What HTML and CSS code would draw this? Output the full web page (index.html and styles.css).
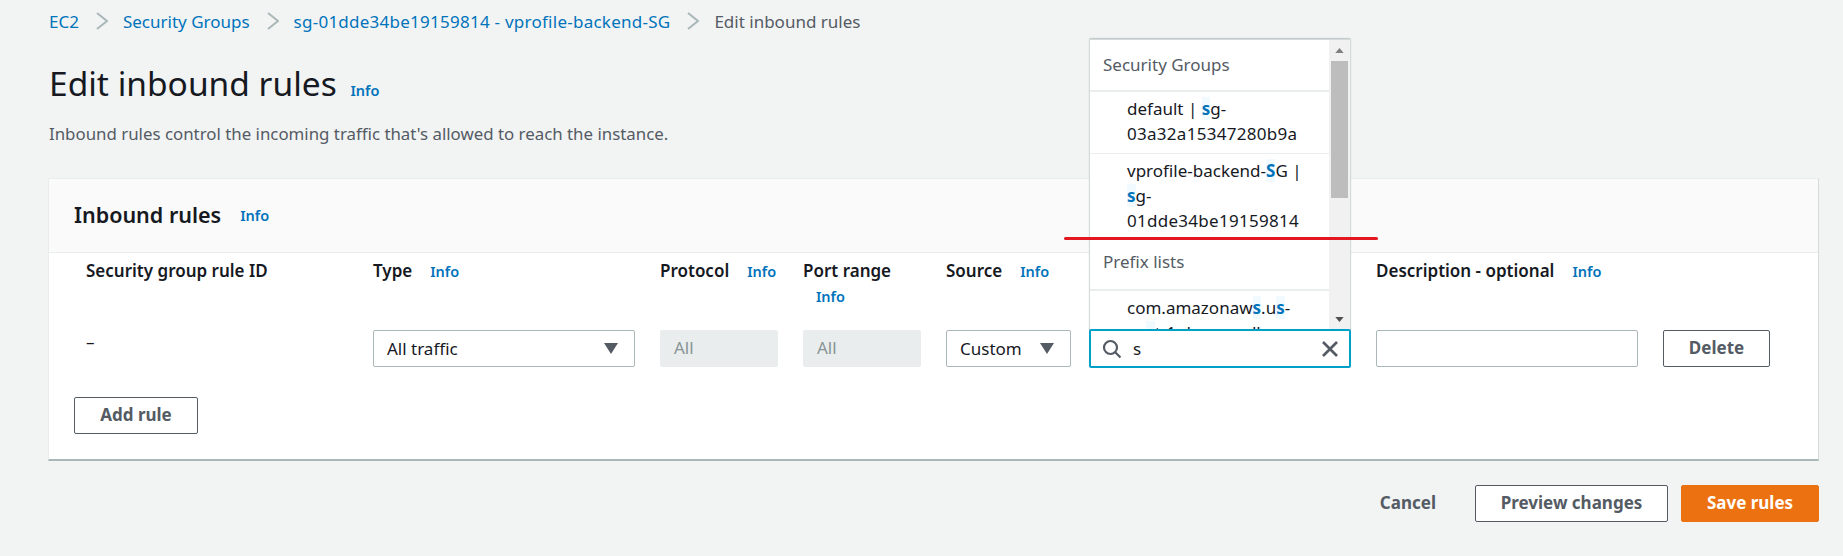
FILE: index.html
```html
<!DOCTYPE html>
<html lang="en">
<head>
  <meta charset="UTF-8" />
  <title>Edit inbound rules</title>
  <link rel="stylesheet" href="styles.css">
</head>
<body>
  <nav class="crumbs">
    <a href="#">EC2</a>
    <svg class="chev" viewBox="0 0 12 18"><polyline points="1,1 11,9 1,17" /></svg>
    <a href="#">Security Groups</a>
    <svg class="chev" viewBox="0 0 12 18"><polyline points="1,1 11,9 1,17" /></svg>
    <a class="sg-link" href="#">sg-01dde34be19159814 - vprofile-backend-SG</a>
    <svg class="chev" viewBox="0 0 12 18"><polyline points="1,1 11,9 1,17" /></svg>
    <span class="here">Edit inbound rules</span>
  </nav>

  <h1>Edit inbound rules <a class="info" href="#">Info</a></h1>
  <p class="lead">Inbound rules control the incoming traffic that's allowed to reach the instance.</p>

  <section class="card">
    <header class="card-head">
      <h2>Inbound rules</h2>
      <a class="info" href="#">Info</a>
    </header>

    <div class="rules">
      <div class="th first">Security group rule ID</div>
      <div class="th"><b>Type</b><a class="info" href="#">Info</a></div>
      <div class="th"><b>Protocol</b><a class="info" href="#">Info</a></div>
      <div class="th"><b>Port range</b><a class="info wrapped" href="#">Info</a></div>
      <div class="th"><b>Source</b><a class="info" href="#">Info</a></div>
      <div class="th"></div>
      <div class="th"><b>Description - optional</b><a class="info" href="#">Info</a></div>
      <div class="th"></div>

      <div class="dash">–</div>
      <div class="pad">
        <div class="field select">All traffic
          <svg class="caret" viewBox="0 0 14 11"><polygon points="0,0 14,0 7,11" /></svg>
        </div>
      </div>
      <div class="pad"><div class="field off">All</div></div>
      <div class="pad"><div class="field off">All</div></div>
      <div>
        <div class="field select">Custom
          <svg class="caret" viewBox="0 0 14 11"><polygon points="0,0 14,0 7,11" /></svg>
        </div>
      </div>

      <div class="pad search-cell">
        <div class="menu">
          <div class="menu-list">
            <div class="group">Security Groups</div>
            <div class="opt">default | <mark>s</mark>g-<br><span class="sg-id">03a32a15347280b9a</span></div>
            <div class="opt last">vprofile-backend-<mark>S</mark>G |<br><mark>s</mark>g-<br><span class="sg-id">01dde34be19159814</span></div>
            <div class="group second">Prefix lists</div>
            <div class="opt">com.amazonaw<mark>s</mark>.u<mark>s</mark>-<br>ea<mark>s</mark>t-1.dynamodb</div>
          </div>
          <div class="scroll">
            <svg class="arrow" viewBox="0 0 10 6"><polygon points="5,0 10,6 0,6" /></svg>
            <div class="thumb"></div>
            <svg class="arrow low" viewBox="0 0 10 6"><polygon points="0,0 10,0 5,6" /></svg>
          </div>
        </div>
        <div class="search">
          <svg class="glass" viewBox="0 0 20 20"><circle cx="8.5" cy="8.5" r="6.5" /><line x1="13.5" y1="13.5" x2="18.5" y2="18.5" /></svg>
          <span class="query">s</span>
          <svg class="clear" viewBox="0 0 16 16"><line x1="1" y1="1" x2="15" y2="15" /><line x1="15" y1="1" x2="1" y2="15" /></svg>
        </div>
        <div class="redline"></div>
      </div>

      <div class="pad"><div class="field"></div></div>
      <div><button class="btn wide">Delete</button></div>
    </div>

    <div class="card-foot">
      <button class="btn add">Add rule</button>
    </div>
  </section>

  <footer class="actions">
    <a class="cancel" href="#">Cancel</a>
    <button class="btn preview">Preview changes</button>
    <button class="btn save">Save rules</button>
  </footer>
</body>
</html>
```

FILE: styles.css
```css
* {
  box-sizing: border-box;
}
body {
  margin: 0;
  padding: 0 24px 0 49px;
  height: 556px;
  overflow: hidden;
  font-family: "Noto Sans", sans-serif;
  font-size: 17px;
  color: #16191f;
  background: #f2f3f3;
}
a {
  color: #0073bb;
  text-decoration: none;
}

.crumbs {
  display: flex;
  align-items: center;
  height: 42px;
}
.chev {
  width: 12px;
  height: 18px;
  margin: 0 15px 0 17px;
  fill: none;
  stroke: #aab7b8;
  stroke-width: 2;
}
.sg-link {
  letter-spacing: 0.25px;
}
.here {
  color: #545b64;
}

h1 {
  margin: 18px 0 0;
  height: 46px;
  font-size: 33.5px;
  line-height: 46px;
  font-weight: 400;
}
h1 .info {
  margin-left: 5px;
}
.info {
  font-size: 14.5px;
  font-weight: 600;
}
.lead {
  margin: 17px 0 0;
  height: 22px;
  line-height: 22px;
  font-size: 16.85px;
  color: #545b64;
}

.card {
  margin: 33px 0 0 -1px;
  width: 1771px;
  height: 283px;
  background: #fff;
  border: 1px solid #eaeded;
  border-right-color: #d5dbdb;
  border-bottom: 2px solid #aab7b8;
}
.card-head {
  display: flex;
  align-items: center;
  gap: 19px;
  height: 74px;
  padding: 0 25px 2px;
  background: #fafafa;
  border-bottom: 1px solid #eaeded;
}
h2 {
  margin: 0;
  font-size: 21.5px;
  font-weight: 600;
}

.rules {
  display: grid;
  grid-template-columns: 281px 269px 125px 125px 125px 269px 269px 107px;
  grid-template-rows: 77px auto;
  column-gap: 18px;
  padding-left: 25px;
}
.th {
  padding-top: 7px;
  line-height: 22px;
  font-weight: 600;
}
.th b {
  margin-right: 18px;
  font-weight: 600;
}
.th.first {
  padding-left: 12px;
}
.wrapped {
  display: block;
  margin: 0 0 0 13px;
  padding-top: 3px;
}
.dash {
  padding-left: 12px;
  line-height: 23px;
}
.pad {
  padding-right: 7px;
}

.field {
  position: relative;
  height: 37px;
  padding-left: 13px;
  line-height: 34px;
  background: #fff;
  border: 1px solid #aab7b8;
  border-radius: 2px;
}
.off {
  background: #eaeded;
  border-color: #eaeded;
  color: #879596;
}
.select {
  display: flex;
  align-items: center;
  justify-content: space-between;
  padding-right: 16px;
}
.caret {
  width: 14px;
  height: 11px;
  fill: #545b64;
}

.search-cell {
  position: relative;
}
.search {
  position: relative;
  display: flex;
  align-items: center;
  height: 39px;
  margin-top: -1px;
  padding: 0 11px 0 11px;
  background: #fff;
  border: 2px solid #00a1c9;
  border-radius: 2px;
}
.glass {
  width: 20px;
  height: 20px;
  fill: none;
  stroke: #545b64;
  stroke-width: 2.2;
}
.query {
  flex: 1;
  margin-left: 11px;
}
.clear {
  width: 16px;
  height: 16px;
  stroke: #545b64;
  stroke-width: 2.6;
}

.menu {
  position: absolute;
  left: 0;
  right: 7px;
  bottom: 37px;
  height: 292px;
  display: flex;
  overflow: hidden;
  background: #fff;
  border: 1px solid #d5dbdb;
  border-bottom: 0;
  border-radius: 2px 2px 0 0;
  box-shadow: 0 -1px 1px rgba(0, 28, 36, 0.2);
}
.menu-list {
  flex: 1;
  overflow: hidden;
  font-size: 17px;
  line-height: 25px;
}
.group {
  height: 52px;
  padding: 12px 0 0 13px;
  color: #545b64;
  border-bottom: 2px solid #eaeded;
}
.group.second {
  padding-top: 10px;
}
.opt {
  padding: 4px 0 7px 37px;
  border-bottom: 1px solid #eaeded;
}
.opt.last {
  padding-bottom: 6px;
  border-bottom: 0;
}
.sg-id {
  letter-spacing: 0.28px;
}
mark {
  color: #0073bb;
  font-weight: 700;
  background: #f1faff;
}
.scroll {
  position: relative;
  width: 21px;
  background: #f1f1f1;
}
.thumb {
  position: absolute;
  top: 21px;
  left: 2px;
  width: 17px;
  height: 137px;
  background: #bdbdbd;
}
.arrow {
  position: absolute;
  top: 8px;
  left: 6px;
  width: 9px;
  height: 5px;
  fill: #7f7f7f;
}
.arrow.low {
  top: auto;
  bottom: 9px;
  fill: #505050;
}
.redline {
  position: absolute;
  left: -25px;
  top: -93px;
  width: 314px;
  height: 3px;
  border-radius: 2px;
  background: #e2171f;
}

.btn {
  height: 37px;
  padding: 0 0 2px;
  font-family: inherit;
  font-size: 17px;
  font-weight: 700;
  color: #545b64;
  background: #fff;
  border: 1px solid #545b64;
  border-radius: 2px;
}
.wide {
  width: 107px;
}
.card-foot {
  padding: 29px 0 0 25px;
}
.add {
  width: 124px;
}

.actions {
  display: flex;
  justify-content: flex-end;
  align-items: center;
  margin-top: 24px;
}
.cancel {
  margin-right: 39px;
  padding-bottom: 2px;
  font-weight: 700;
  color: #545b64;
}
.preview {
  width: 193px;
  margin-right: 13px;
}
.save {
  width: 138px;
  color: #fff;
  background: #ec7211;
  border-color: #ec7211;
}
```
